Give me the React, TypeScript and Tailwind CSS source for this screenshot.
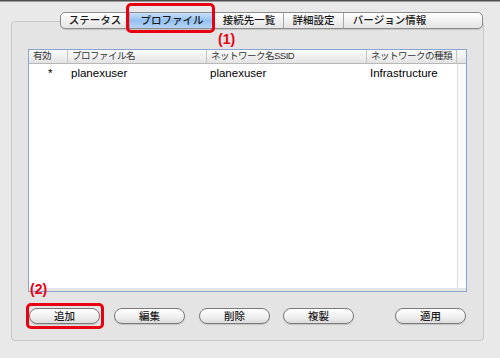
import React from "react";

const JP = { fontFamily: '"Liberation Sans", "Noto Sans CJK JP", sans-serif' };

type Col = { label: string; width: string };

const COLS: Col[] = [
  { label: "有効", width: "w-[39px]" },
  { label: "プロファイル名", width: "w-[139px]" },
  { label: "ネットワーク名SSID", width: "w-[160px]" },
  { label: "ネットワークの種類", width: "w-[90px]" },
];

const TABS = [
  { label: "ステータス", width: "w-[68px]" },
  { label: "プロファイル", width: "w-[85px]", active: true },
  { label: "接続先一覧", width: "w-[69px]" },
  { label: "詳細設定", width: "w-[60px]" },
  { label: "バージョン情報", width: "w-[92px]" },
];

function Tabs() {
  return (
    <div className="flex h-[17px] ml-[48px] -mt-[10px] rounded-[5px] border border-[#8d8d8d] overflow-hidden bg-gradient-to-b from-[#ffffff] to-[#e4e4e4] shadow-[0_1px_1px_rgba(0,0,0,0.15)]">
      {TABS.map((t, i) => (
        <div
          key={t.label}
          className={`${t.width} flex items-center justify-center text-[10.5px] font-medium text-[#1a1a1a] ${
            i > 0 ? "border-l border-[#a6a6a6]" : ""
          } ${t.active ? "bg-gradient-to-b from-[#c8e0fa] via-[#93c0f0] to-[#b5d5f7]" : ""}`}
        >
          {t.label}
        </div>
      ))}
    </div>
  );
}

function Btn({ label, className }: { label: string; className?: string }) {
  return (
    <button
      className={`w-[71px] h-[16px] rounded-full border border-[#7a7a7a] bg-gradient-to-b from-[#ffffff] via-[#f2f2f2] to-[#dcdcdc] text-[10.5px] font-medium text-[#1c1c1c] leading-none flex items-center justify-center shadow-[0_1px_1px_rgba(0,0,0,0.15)] ${className ?? ""}`}
    >
      {label}
    </button>
  );
}

function ProfileList() {
  return (
    <div className="ml-[16px] mt-[20px] w-[439px] h-[243px] border border-[#88a4cf] bg-white flex flex-col">
      <div className="flex h-[14px] bg-gradient-to-b from-[#ffffff] to-[#e2e2e2] border-b border-[#b8b8b8] text-[9.5px] tracking-[-0.5px] text-[#333]">
        {COLS.map((c) => (
          <div
            key={c.label}
            className={`${c.width} border-r border-[#c4c4c4] pl-[4px] flex items-center whitespace-nowrap overflow-hidden`}
          >
            {c.label}
          </div>
        ))}
        <div className="flex-1" />
      </div>
      <div className="flex flex-1 min-h-0">
        <div className="flex-1 flex flex-col">
          <div className="flex h-[19px] items-center text-[11.5px] text-black">
            <div className="w-[39px] pl-[19px] pt-[1px]">*</div>
            <div className="w-[139px] pl-[3px]">planexuser</div>
            <div className="w-[160px] pl-[3px]">planexuser</div>
            <div className="w-[90px] pl-[3px]">Infrastructure</div>
          </div>
        </div>
        <div className="w-[9px] border-l border-[#dcdcdc] bg-[#fafafa] flex flex-col justify-end">
          <div className="h-[7px] bg-white" />
        </div>
      </div>
      <div className="h-[3px] bg-[#e6e6e6]" />
    </div>
  );
}

export default function App() {
  return (
    <div className="relative w-[500px] h-[358px] bg-[#e9e9e9] overflow-hidden" style={JP}>
      <div className="h-[1px] bg-[#4e4e4e]" />
      <div className="h-[1px] bg-[#9a9a9a]" />
      <div className="ml-[11px] mt-[19px] w-[473px] h-[320px] rounded-[4px] border border-[#c9c9c9] bg-[#e4e4e4]">
        <Tabs />
        <ProfileList />
        <div className="flex mt-[16px] ml-[17px]">
          <Btn label="追加" />
          <Btn label="編集" className="ml-[14px]" />
          <Btn label="削除" className="ml-[14px]" />
          <Btn label="複製" className="ml-[13px]" />
          <Btn label="適用" className="ml-[41px]" />
        </div>
      </div>

      {/* annotations */}
      <div className="absolute left-[126px] top-[3px] w-[89px] h-[30px] rounded-[5px] border-[3px] border-[#e60012]" />
      <div className="absolute left-[218px] top-[32px] text-[14px] font-bold leading-none text-[#e60012]">(1)</div>
      <div className="absolute left-[26px] top-[303px] w-[78px] h-[26px] rounded-[5px] border-[3px] border-[#e60012]" />
      <div className="absolute left-[30px] top-[282px] text-[14px] font-bold leading-none text-[#e60012]">(2)</div>
    </div>
  );
}
